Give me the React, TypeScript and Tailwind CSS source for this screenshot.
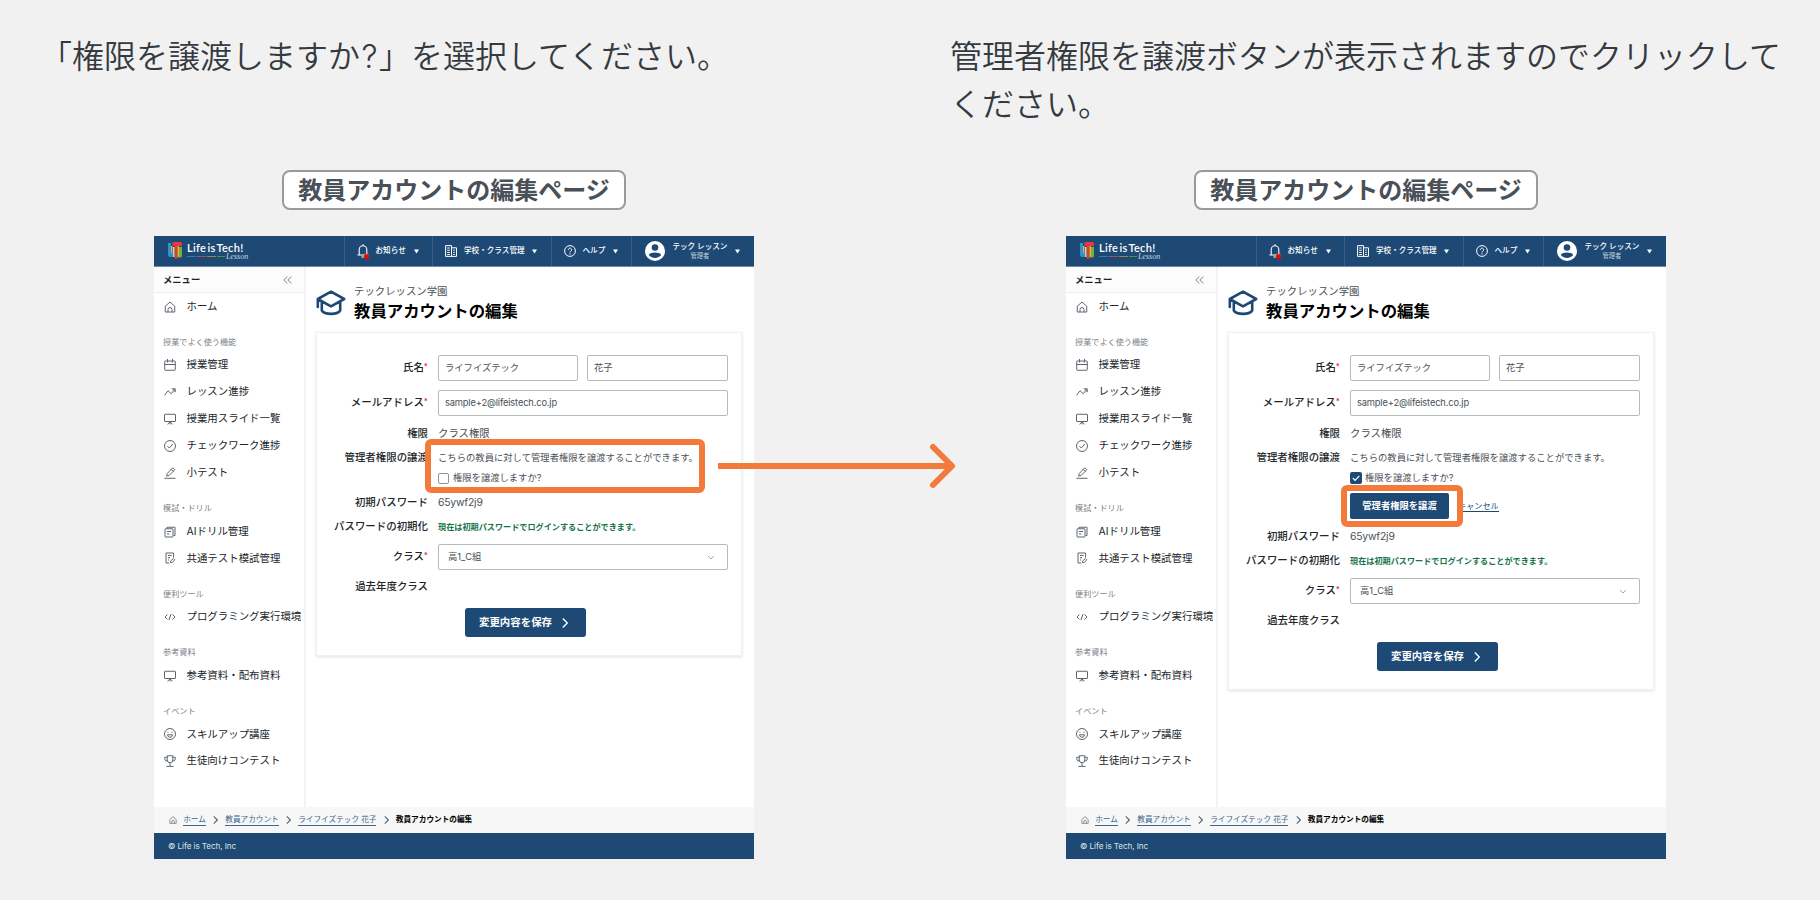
import type { ReactNode } from "react";

const icons: Record<string, ReactNode> = {
  home: (
    <>
      <path d="M2.500 10.500 12 2l9.500 8.500V22h-19z" />
      <path d="M8 22v-5a4 4 0 0 1 8 0v5" />
    </>
  ),
  calendar: (
    <>
      <rect x="1.500" y="4" width="21" height="18.500" rx="1" />
      <path d="M1 11h22M7 0v7M17 0v7" />
    </>
  ),
  trend: (
    <>
      <path d="M1 18.500 8 9.500l6.500 6L21 7" />
      <path d="M16.500 5.500h6v6z" />
    </>
  ),
  board: (
    <>
      <rect x="1" y="2.500" width="22" height="14.500" rx="1" />
      <path d="M12 17v6M12 18l-5 4.500M12 18l5 4.500" />
    </>
  ),
  check: (
    <>
      <circle cx="12" cy="12" r="11" />
      <path d="m7 12.500 3.500 3.500L17.500 8" />
    </>
  ),
  pen: (
    <>
      <path d="M5 18 6.500 13 17.500 1.500l4 4L10 17z" />
      <path d="M14.500 5 18.500 9M1 22.500h22" />
    </>
  ),
  drill: (
    <>
      <path d="M6 5V2.500h16V19h-3" />
      <rect x="2" y="5.500" width="16" height="16.500" rx="1" />
      <path d="M6 11h8M6 16h5" />
    </>
  ),
  exam: (
    <>
      <path d="M10 22H4V2h15v9" />
      <path d="M8 7h7M8 11.500h4M8 16h2M13 18l6-5 2.500 2.500-5 5.500H13z" />
    </>
  ),
  code: <path d="m7 7-5 5 5 5M17 7l5 5-5 5M14 6l-4 12" />,
  smile: (
    <>
      <circle cx="12" cy="12" r="11" />
      <path d="M7 13.500h10a5 5 0 0 1-10 0zM8 7.500v2M16 7.500v2" />
    </>
  ),
  trophy: (
    <>
      <path d="M6.500 1.500h11V10a5.500 5.500 0 0 1-11 0zM6.500 4.500h-5V8a4.500 4.500 0 0 0 5.500 4M17.500 4.500h5V8a4.500 4.500 0 0 1-5.500 4" />
      <path d="M12 15.500V22M5 22.800h14" />
    </>
  ),
};

const menu = [
  {
    title: "授業でよく使う機能",
    items: [
      ["calendar", "授業管理"],
      ["trend", "レッスン進捗"],
      ["board", "授業用スライド一覧"],
      ["check", "チェックワーク進捗"],
      ["pen", "小テスト"],
    ],
  },
  {
    title: "模試・ドリル",
    items: [
      ["drill", "AIドリル管理"],
      ["exam", "共通テスト模試管理"],
    ],
  },
  { title: "便利ツール", items: [["code", "プログラミング実行環境"]] },
  { title: "参考資料", items: [["board", "参考資料・配布資料"]] },
  {
    title: "イベント",
    items: [
      ["smile", "スキルアップ講座"],
      ["trophy", "生徒向けコンテスト"],
    ],
  },
];

function Icon({ name, className }: { name: string; className: string }) {
  return (
    <svg
      viewBox="0 0 24 24"
      fill="none"
      stroke="currentColor"
      strokeWidth="2"
      strokeLinejoin="round"
      className={className}
    >
      {icons[name]}
    </svg>
  );
}

function Caret() {
  return (
    <svg viewBox="0 0 6 5" fill="currentColor" className="w-[5px] h-[5px] shrink-0">
      <path d="M0 0h6L3 5z" />
    </svg>
  );
}

function Chevron({ className }: { className: string }) {
  return (
    <svg
      viewBox="0 0 6 10"
      fill="none"
      stroke="currentColor"
      strokeWidth="1.400"
      className={className}
    >
      <path d="m.8.5 4.500 4.500L.8 9.500" />
    </svg>
  );
}

function Logo() {
  return (
    <div className="flex w-[189.500px] pl-[14px] items-start pt-[5px] gap-[5px]">
      <svg viewBox="0 0 14 17" className="w-[14px] h-[17px] mt-px">
        <path d="M0 1h3v10h2v4H2a2 2 0 0 1-2-2z" fill="#2a93d5" />
        <path d="M3 4h1.500v7H3z" fill="#f0b429" />
        <path d="M4.500 0h8a1.500 1.500 0 0 1 1.500 1.500V4H4.500z" fill="#e5393d" />
        <path d="M6.500 4h3v11.500a1.500 1.500 0 0 1-3 0z" fill="#e5393d" />
        <path d="M5 5h1.500v10H5z" fill="#b6dcc0" />
        <path d="M10.500 5H14v9a1.500 1.500 0 0 1-1.500 1.500h-2z" fill="#6cb33f" />
        <path d="M9.500 4h1.500v11H9.500z" fill="#f0b429" />
      </svg>
      <div className="flex flex-col">
        <span className="text-[11px] leading-[13px] font-semibold font-['Lato'] tracking-[0.300px] [word-spacing:-1.800px] whitespace-nowrap">
          Life is Tech!
        </span>
        <div className="flex items-center h-[4px]">
          <i className="w-[9px] h-px mr-px bg-[#2f7fb8]" />
          <i className="w-[9px] h-px mr-px bg-[#a2545e]" />
          <i className="w-[9px] h-px mr-px bg-[#8d8d4a]" />
          <i className="w-[8px] h-px bg-[#4c8f5c]" />
          <span className="text-[8px] leading-[5px] pl-px italic font-normal font-['Liberation_Serif'] text-[#c9d6e2]">
            Lesson
          </span>
        </div>
      </div>
    </div>
  );
}

function Header() {
  return (
    <header className="flex h-[31px] shrink-0 bg-[#1d4974] border-b border-[#6b8bab] text-white text-[7.600px] font-medium whitespace-nowrap">
      <Logo />
      <div className="flex items-center w-[88px] pl-[12px] border-l border-[#37608a]">
        <div className="relative mr-[7px]">
          <svg viewBox="0 0 12 14" fill="none" stroke="currentColor" strokeWidth="1.100" className="w-[12px] h-[14px]">
            <path d="M2.200 11V5.500a3.800 3.800 0 0 1 7.600 0V11M.500 11h11M6 .200v1.500M4.500 13h3" />
          </svg>
          <span className="absolute right-0 -bottom-px w-[5px] h-[5px] rounded-full bg-[#f00]" />
        </div>
        <span className="mr-[8px]">お知らせ</span>
        <Caret />
      </div>
      <div className="flex items-center w-[119px] pl-[12.500px] border-l border-[#37608a]">
        <svg viewBox="0 0 12 12" fill="none" stroke="currentColor" strokeWidth="1" className="w-[12px] h-[12px] mr-[7px]">
          <path d="M.600.600h5.900v10.800H.600zM6.500 2.800h5v8.600h-5M2.200 3h2.600M2.200 5.200h2.600M2.200 7.400h2.600M2.200 9.500h2.600M8.200 5.200h1.600M8.200 7.400h1.600M8.200 9.500h1.600" />
        </svg>
        <span className="mr-[7px]">学校・クラス管理</span>
        <Caret />
      </div>
      <div className="flex items-center w-[80px] pl-[12px] border-l border-[#37608a]">
        <svg viewBox="0 0 12 12" fill="none" stroke="currentColor" strokeWidth="1" className="w-[12px] h-[12px] mr-[7px]">
          <circle cx="6" cy="6" r="5.400" />
          <path d="M4.400 4.700a1.600 1.600 0 1 1 2.500 1.400c-.6.400-.9.700-.9 1.300M6 8.300v1.200" />
        </svg>
        <span className="mr-[8px]">ヘルプ</span>
        <Caret />
      </div>
      <div className="flex items-center flex-1 pl-[13px] border-l border-[#37608a]">
        <svg viewBox="0 0 20 20" className="w-[20px] h-[20px] mr-[8px]">
          <circle cx="10" cy="10" r="10" fill="#fff" />
          <circle cx="10" cy="6.500" r="3.300" fill="#1d4974" />
          <path d="M3.800 13.800c1.800-3.200 10.600-3.200 12.400 0-2.500 4.200-9.900 4.200-12.400 0z" fill="#1d4974" />
        </svg>
        <div className="flex flex-col items-center mr-[8px]">
          <span className="leading-[10px] tracking-[-0.050px]">テック レッスン</span>
          <span className="leading-[9px] text-[6.300px] font-normal text-[#c3d0dd]">
            管理者
          </span>
        </div>
        <Caret />
      </div>
    </header>
  );
}

function Sidebar() {
  return (
    <aside className="w-[151px] shrink-0 border-r border-[#eeeff0] shadow-[1px_0_2px_rgba(0,0,0,0.040)] whitespace-nowrap text-[#212529]">
      <div className="flex items-center justify-between h-[26px] pl-[9px] pr-[12px] border-b border-[#eeeff0] bg-[#fcfcfc] text-[9.300px] font-bold">
        メニュー
        <svg viewBox="0 0 9 8" fill="none" stroke="#6c757d" strokeWidth="0.900" className="w-[9px] h-[8px]">
          <path d="M4.300.500.800 4l3.500 3.500M8.300.500 4.800 4l3.500 3.500" />
        </svg>
      </div>
      <div className="flex items-center h-[27px] pl-[10px] gap-[10.500px] text-[10.450px]">
        <Icon name="home" className="w-[12px] h-[12px] text-[#5d666f]" />
        ホーム
      </div>
      {menu.map((group) => (
        <div key={group.title}>
          <div className="flex items-end h-[31.700px] pl-[9px] pb-[3px] text-[8.150px] leading-[13px] text-[#7b8288]">
            {group.title}
          </div>
          {group.items.map(([icon, label]) => (
            <div
              key={label}
              className="flex items-center h-[26.950px] pl-[10px] gap-[10.500px] text-[10.450px]"
            >
              <Icon name={icon} className="w-[12px] h-[12px] shrink-0 text-[#5d666f]" />
              {label}
            </div>
          ))}
        </div>
      ))}
    </aside>
  );
}

function Row({
  label,
  required,
  className,
  children,
}: {
  label: string;
  required?: boolean;
  className: string;
  children?: ReactNode;
}) {
  return (
    <div className={`flex items-center ${className}`}>
      <div className="flex justify-end w-[111px] shrink-0 mr-[10px] text-[10.450px] font-medium text-[#212529] whitespace-nowrap">
        {label}
        {required && <span className="text-[#f0142f] text-[8px]">*</span>}
      </div>
      {children}
    </div>
  );
}

function Form({ transfer }: { transfer: boolean }) {
  return (
    <div className="w-[426px] pt-[22px] pb-[18px] border border-[#f0f1f2] bg-white shadow-[0_1px_3px_rgba(0,0,0,0.120)] text-[#495057] text-[9.300px] whitespace-nowrap">
      <Row label="氏名" required className="h-[26px]">
        <div className="flex items-center w-[140px] h-[26px] mr-[9px] px-[6px] rounded-[2px] border border-[#b4b9be]">
          ライフイズテック
        </div>
        <div className="flex items-center w-[141px] h-[26px] px-[6px] rounded-[2px] border border-[#b4b9be]">
          花子
        </div>
      </Row>
      <Row label="メールアドレス" required className="h-[26px] mt-[9px]">
        <div className="flex items-center w-[290px] h-[26px] px-[6px] rounded-[2px] border border-[#b4b9be] tracking-[-0.150px]">
          sample+2@lifeistech.co.jp
        </div>
      </Row>
      <Row label="権限" className="h-[24px] mt-[6px]">
        <span className="text-[10.400px]">クラス権限</span>
      </Row>
      <Row label="管理者権限の譲渡" className="h-[24px]">
        <span className="tracking-[0.030px]">
          こちらの教員に対して管理者権限を譲渡することができます。
        </span>
      </Row>
      <div className="flex items-center h-[18px] -mt-px pl-[121px] gap-[4px]">
        {transfer ? (
          <svg viewBox="0 0 12 12" className="w-[12px] h-[12px] -mr-px">
            <rect width="12" height="12" rx="2" fill="#1d4974" />
            <path d="m2.800 6 2.300 2.400 4.200-4.600" fill="none" stroke="#fff" strokeWidth="1.200" />
          </svg>
        ) : (
          <span className="w-[11px] h-[11px] rounded-[2px] border border-[#8b9299]" />
        )}
        権限を譲渡しますか?
      </div>
      {transfer && (
        <div className="flex items-center pl-[121px] pt-[6px] pb-[2px]">
          <div className="relative mr-[9px]">
            <div className="flex items-center justify-center w-[99px] h-[26px] rounded-[2px] bg-[#1d4974] text-white font-bold">
              管理者権限を譲渡
            </div>
            <span className="absolute -left-[9px] -top-[8px] w-[122px] h-[42px] rounded-[6px] border-[6px] border-[#f27a3a]" />
          </div>
          <span className="text-[8.150px] leading-[10px] border-b border-[#1d4974] text-[#1d4974]">
            キャンセル
          </span>
        </div>
      )}
      <Row label="初期パスワード" className="h-[24px] mt-[4px]">
        <span className="text-[10.400px] tracking-[-0.200px]">65ywf2j9</span>
      </Row>
      <Row label="パスワードの初期化" className="h-[24px]">
        <span className="text-[8.150px] font-bold text-[#157347]">
          現在は初期パスワードでログインすることができます。
        </span>
      </Row>
      <Row label="クラス" required className="h-[26px] mt-[5px]">
        <div className="flex items-center justify-between w-[290px] h-[26px] pl-[9px] pr-[14px] rounded-[2px] border border-[#b4b9be]">
          高1_C組
          <Chevron className="w-[4px] h-[7px] rotate-90 text-[#9aa1a7]" />
        </div>
      </Row>
      <Row label="過去年度クラス" className="h-[24px] mt-[5px]" />
      <div className="flex items-center w-[121px] h-[29px] ml-[148px] mt-[9px] pl-[14px] gap-[10px] rounded-[3px] bg-[#1d4974] text-white text-[10.450px] font-bold">
        変更内容を保存
        <Chevron className="w-[6px] h-[10px]" />
      </div>
    </div>
  );
}

function Mock({ transfer = false }: { transfer?: boolean }) {
  return (
    <div className="relative flex flex-col w-[600px] h-[623px] bg-white">
      <Header />
      <div className="flex flex-1 min-h-0">
        <Sidebar />
        <main className="flex flex-col pl-[11px] pt-[13px]">
          <div className="flex items-start h-[52px] gap-[8px]">
            <svg
              viewBox="0 0 30 26"
              fill="none"
              stroke="#1d4974"
              strokeWidth="2.600"
              strokeLinejoin="round"
              strokeLinecap="round"
              className="w-[30px] h-[26px] mt-[10px]"
            >
              <path d="M1.800 9 15 1.700 28.200 9 15 16.300zM1.800 9v8M5.800 12v8.500c2.700 4.500 15.700 4.500 18.400 0V12" />
            </svg>
            <div className="flex flex-col pt-[4px] whitespace-nowrap">
              <span className="text-[10.400px] leading-[16px] text-[#495057]">
                テックレッスン学園
              </span>
              <h2 className="text-[16.400px] leading-[22px] font-bold text-black">
                教員アカウントの編集
              </h2>
            </div>
          </div>
          <Form transfer={transfer} />
        </main>
      </div>
      <nav className="flex items-center h-[26px] pl-[15px] gap-[7.200px] bg-[#f7f7f7] text-[7.650px] leading-[10px] whitespace-nowrap text-[#40658b]">
        <Icon name="home" className="w-[8px] h-[8px] -mr-px text-[#5d666f]" />
        <span className="border-b border-[#40658b]">ホーム</span>
        <Chevron className="w-[5px] h-[8px] text-[#5d666f]" />
        <span className="border-b border-[#40658b]">教員アカウント</span>
        <Chevron className="w-[5px] h-[8px] text-[#5d666f]" />
        <span className="border-b border-[#40658b]">ライフイズテック 花子</span>
        <Chevron className="w-[5px] h-[8px] text-[#5d666f]" />
        <b className="text-black">教員アカウントの編集</b>
      </nav>
      <footer className="flex items-center h-[26px] pl-[14px] bg-[#1d4974] text-[8.150px] tracking-[-0.080px] text-[#dbe3ea]">
        © Life is Tech, Inc
      </footer>
      {!transfer && (
        <>
          <span className="absolute left-[271px] top-[203px] w-[280px] h-[54px] rounded-[6px] border-[6px] border-[#f27a3a]" />
          <svg
            viewBox="0 0 240 48"
            fill="none"
            stroke="#f27a3a"
            strokeWidth="6"
            strokeLinejoin="round"
            className="absolute z-10 left-[564px] top-[206px] w-[240px] h-[48px]"
          >
            <path d="M0 24h232" />
            <path d="m215 5 19 19-19 19" strokeLinecap="round" />
          </svg>
        </>
      )}
    </div>
  );
}

function Step({ text, children }: { text: ReactNode; children: ReactNode }) {
  return (
    <section className="flex flex-col items-center w-[832px]">
      <p className="w-full h-[137px] text-[32px] leading-[48px] font-[350] text-[#343a40] whitespace-nowrap">
        {text}
      </p>
      <h1 className="flex items-center justify-center w-[344px] h-[40px] pt-[2px] mb-[26px] rounded-[8px] border-2 border-[#949ba1] bg-white text-[24px] font-bold text-[#495057]">
        教員アカウントの編集ページ
      </h1>
      {children}
    </section>
  );
}

export default function App() {
  return (
    <div
      lang="ja"
      className="flex w-[1820px] h-[900px] pt-[33px] pl-[38px] gap-[80px] overflow-hidden bg-[#f1f1f1] font-['Inter','Noto_Sans_CJK_JP',sans-serif]"
    >
      <Step
        text={
          <span className="pl-[2px]">
            「権限を譲渡しますか<span className="px-[1.500px]">?</span>」を選択してください。
          </span>
        }
      >
        <Mock />
      </Step>
      <Step
        text={
          <>
            管理者権限を譲渡ボタンが表示されますのでクリックして
            <br />
            ください。
          </>
        }
      >
        <Mock transfer />
      </Step>
    </div>
  );
}
